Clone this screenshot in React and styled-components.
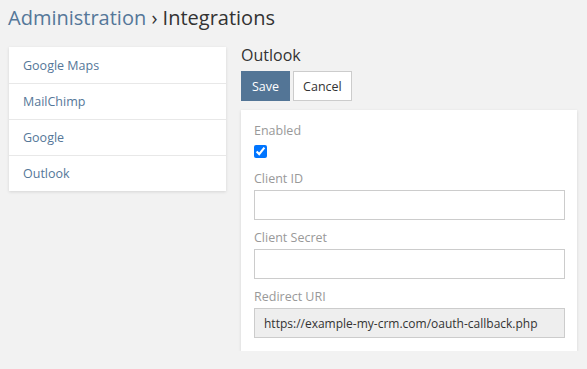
import React from "react";
import styled, { createGlobalStyle } from "styled-components";

const GlobalStyle = createGlobalStyle`
  html, body {
    margin: 0;
    padding: 0;
    background: #f2f2f2;
  }
  body {
    font-family: "Open Sans", "Liberation Sans", sans-serif;
    font-size: 12.5px;
    color: #333;
  }
`;

const Page = styled.div`
  padding: 5px 8px 0 8px;
`;

const Header = styled.h3`
  margin: 0;
  font-size: 20px;
  font-weight: 400;
  line-height: 26px;
  color: #333;
  a {
    color: #557799;
    text-decoration: none;
  }
`;

const Layout = styled.div`
  display: flex;
  align-items: flex-start;
  margin-top: 11px;
`;

const Menu = styled.ul`
  list-style: none;
  margin: 5px 0 0 1px;
  padding: 0;
  width: 217px;
  background: #fff;
  box-shadow: 0 1px 3px rgba(0, 0, 0, 0.12);
`;

const MenuItem = styled.li`
  height: 36px;
  display: flex;
  align-items: center;
  padding: 0 14px;
  border-top: ${(p) => (p.first ? "none" : "1px solid #e8e8e8")};
  box-sizing: border-box;
  color: #557799;
`;

const Main = styled.div`
  margin-left: 15px;
  width: 336px;
`;

const Title = styled.h4`
  margin: 2px 0 0 0;
  font-size: 16px;
  font-weight: 400;
  line-height: 22px;
  color: #333;
`;

const Buttons = styled.div`
  display: flex;
  gap: 3px;
  margin-top: 5px;
`;

const Button = styled.button`
  height: 30px;
  padding: 0 ${(p) => (p.primary ? "10px" : "9px")};
  font-family: inherit;
  font-size: 12.5px;
  border: 1px solid ${(p) => (p.primary ? "#537596" : "#ccc")};
  background: ${(p) => (p.primary ? "#537596" : "#fff")};
  color: ${(p) => (p.primary ? "#fff" : "#333")};
  border-radius: 0;
  cursor: pointer;
`;

const Panel = styled.div`
  margin-top: 9px;
  background: #fff;
  padding: 12px 12px 13px 13px;
  box-shadow: 0 1px 3px rgba(0, 0, 0, 0.12);
`;

const Field = styled.div`
  display: flex;
  flex-direction: column;
  & + & {
    margin-top: 9px;
  }
`;

const Label = styled.label`
  display: block;
  color: #999;
  line-height: 18px;
  margin-bottom: 2px;
`;

const Check = styled.input`
  display: block;
  width: 13px;
  height: 13px;
  margin: 3px 0 3px 0;
  accent-color: #0075ff;
`;

const Input = styled.input`
  display: block;
  box-sizing: border-box;
  width: 100%;
  height: 30px;
  border: 1px solid #ccc;
  border-radius: 0;
  padding: 0 9px;
  font-family: inherit;
  font-size: 12px;
  color: #333;
  background: ${(p) => (p.readOnly ? "#eee" : "#fff")};
  outline: none;
`;

const items = ["Google Maps", "MailChimp", "Google", "Outlook"];

export default function App() {
  return (
    <>
      <GlobalStyle />
      <Page>
        <Header>
          <a href="#admin">Administration</a> › Integrations
        </Header>
        <Layout>
          <Menu>
            {items.map((name, i) => (
              <MenuItem key={name} first={i === 0}>
                {name}
              </MenuItem>
            ))}
          </Menu>
          <Main>
            <Title>Outlook</Title>
            <Buttons>
              <Button primary>Save</Button>
              <Button>Cancel</Button>
            </Buttons>
            <Panel>
              <Field>
                <Label>Enabled</Label>
                <Check type="checkbox" defaultChecked />
              </Field>
              <Field>
                <Label>Client ID</Label>
                <Input type="text" />
              </Field>
              <Field>
                <Label>Client Secret</Label>
                <Input type="text" />
              </Field>
              <Field>
                <Label>Redirect URI</Label>
                <Input
                  type="text"
                  readOnly
                  value="https://example-my-crm.com/oauth-callback.php"
                />
              </Field>
            </Panel>
          </Main>
        </Layout>
      </Page>
    </>
  );
}
